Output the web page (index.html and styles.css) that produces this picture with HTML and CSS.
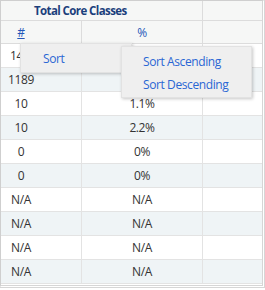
FILE: index.html
```html
<!DOCTYPE html>
<html>
<head>
<meta charset="utf-8">
<link rel="stylesheet" href="styles.css">
</head>
<body>
<div class="frame">
  <div class="grid">
    <div class="row head">
      <div class="cell span2 title">Total Core Classes</div>
      <div class="cell c3"></div>
    </div>
    <div class="row head sub">
      <div class="cell c1"><span class="link">#</span></div>
      <div class="cell c2">%</div>
      <div class="cell c3"></div>
    </div>
    <div class="row"><div class="cell c1 left">14</div><div class="cell c2"></div><div class="cell c3"></div></div>
    <div class="row alt"><div class="cell c1">1189</div><div class="cell c2"></div><div class="cell c3"></div></div>
    <div class="row"><div class="cell c1">10</div><div class="cell c2">1.1%</div><div class="cell c3"></div></div>
    <div class="row alt"><div class="cell c1">10</div><div class="cell c2">2.2%</div><div class="cell c3"></div></div>
    <div class="row"><div class="cell c1">0</div><div class="cell c2">0%</div><div class="cell c3"></div></div>
    <div class="row alt"><div class="cell c1">0</div><div class="cell c2">0%</div><div class="cell c3"></div></div>
    <div class="row"><div class="cell c1">N/A</div><div class="cell c2">N/A</div><div class="cell c3"></div></div>
    <div class="row alt"><div class="cell c1">N/A</div><div class="cell c2">N/A</div><div class="cell c3"></div></div>
    <div class="row"><div class="cell c1">N/A</div><div class="cell c2">N/A</div><div class="cell c3"></div></div>
    <div class="row alt"><div class="cell c1">N/A</div><div class="cell c2">N/A</div><div class="cell c3"></div></div>
  </div>
  <div class="menu menu-main"><div class="item">Sort</div></div>
  <div class="menu menu-sub">
    <div class="item">Sort Ascending</div>
    <div class="item">Sort Descending</div>
  </div>
</div>
</body>
</html>
```
FILE: styles.css
```css
html, body { margin: 0; padding: 0; background: #ffffff; }
body { font-family: "Open Sans", "Liberation Sans", sans-serif; font-size: 12px; letter-spacing: -0.4px; color: #333333; }
.frame {
  position: relative;
  width: 261px;
  height: 284px;
  border: 1px solid #cfcfcf;
  border-right: 3px double #d6d6d6;
  border-bottom: 3px double #d6d6d6;
  overflow: hidden;
}
.grid { display: flex; flex-direction: column; }
.row {
  display: grid;
  grid-template-columns: 81px 121px 59px;
  height: 24px;
  border-bottom: 1px solid #e3e3e3;
  box-sizing: border-box;
  background: #ffffff;
}
.row.alt { background: #eff4f6; }
.row.head { background: #f6f7f6; height: 20px; border-bottom: 1px solid #dcdcdc; }
.row.head.sub { height: 23px; }
.head .span2 { grid-column: 1 / 3; }
.cell {
  display: flex;
  align-items: center;
  border-right: 1px solid #e3e3e3;
  white-space: nowrap;
}
.head .cell { border-right-color: #dcdcdc; }
.cell.c3 { border-right: none; }
.cell.c1 { justify-content: center; padding-right: 40px; }
.cell.c1.left { justify-content: flex-start; padding-left: 9px; padding-right: 0; }
.cell.c2 { justify-content: center; }
.title {
  padding-left: 33px;
  font-weight: bold;
  font-size: 11.5px;
  letter-spacing: -0.6px;
  color: #1c3f7c;
}
.link { color: #2456b8; text-decoration: underline; }
.sub .c2 { color: #2456b8; }
.menu {
  position: absolute;
  background: #efefef;
  border: 1px solid #e2e2e2;
  box-shadow: 1px 1px 3px rgba(0,0,0,0.22);
  color: #2a66d4;
  font-size: 12px;
}
.menu-main { left: 19px; top: 42px; width: 110px; height: 28px; }
.menu-main .item { padding-left: 22px; line-height: 29px; }
.menu-sub { left: 120px; top: 45px; width: 131px; height: 52px; padding-top: 3px; box-sizing: border-box; }
.menu-sub .item { padding-left: 21px; line-height: 23px; }
```
